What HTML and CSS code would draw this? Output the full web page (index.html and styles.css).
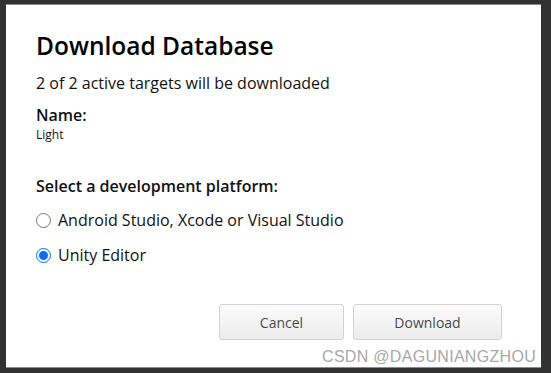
FILE: index.html
```html
<!DOCTYPE html>
<html lang="en">
<head>
  <meta charset="UTF-8">
  <title>Download Database</title>
  <link rel="stylesheet" href="styles.css">
</head>
<body>

<div class="dialog">
  <h1>Download Database</h1>
  <p class="summary">2 of 2 active targets will be downloaded</p>

  <div class="field">
    <div class="field-label">Name:</div>
    <div class="field-value">Light</div>
  </div>

  <div class="platforms">
    <div class="field-label">Select a development platform:</div>
    <label class="option"><input type="radio" name="platform"> Android Studio, Xcode or Visual Studio</label>
    <label class="option"><input type="radio" name="platform" checked> Unity Editor</label>
  </div>

  <div class="buttons">
    <button class="btn btn-cancel">Cancel</button>
    <button class="btn btn-download">Download</button>
  </div>

  <div class="watermark">CSDN @DAGUNIANGZHOU</div>
</div>

</body>
</html>
```

FILE: styles.css
```css
body {
  margin: 0;
  background: #323232;
  font-family: "Open Sans", "Noto Sans", sans-serif;
  color: #111;
}

.dialog {
  position: relative;
  box-sizing: border-box;
  width: 535px;
  height: 364px;
  margin: 4px 0 0 6px;
  border-top: 1px solid #8a8a8a;
  border-bottom: 1px solid #8a8a8a;
  background: #fff;
  padding: 25px 30px 0 30px;
}

h1 {
  margin: 0;
  font-size: 24.5px;
  font-weight: 600;
  line-height: 32px;
  color: #000;
}

.summary {
  margin: 10px 0 0 0;
  font-size: 16px;
  line-height: 22px;
}

.field {
  margin-top: 10px;
}

.field-label {
  font-size: 16px;
  font-weight: 600;
  line-height: 22px;
}

.field-value {
  margin-top: 1px;
  font-size: 12px;
  line-height: 16px;
}

.platforms {
  margin-top: 32px;
}

.platforms .field-label {
  margin-bottom: 1px;
}

.option {
  display: flex;
  align-items: center;
  gap: 7px;
  margin-top: 12px;
  font-size: 16px;
  line-height: 23px;
}

.option input {
  margin: 0;
  width: 15px;
  height: 15px;
  accent-color: #0a6ef0;
}

.buttons {
  display: flex;
  justify-content: flex-end;
  gap: 9px;
  margin-top: 37px;
  padding-right: 9px;
}

.btn {
  height: 36px;
  border: 1px solid #d2d2d2;
  border-radius: 3px;
  background: linear-gradient(#fcfcfc, #ececec);
  font-family: "Open Sans", "Noto Sans", sans-serif;
  font-size: 14px;
  color: #4a4a4a;
}

.btn-cancel {
  width: 125px;
}

.btn-download {
  width: 149px;
}

.watermark {
  position: absolute;
  right: 5px;
  bottom: 1px;
  font-family: "Liberation Sans", Arial, sans-serif;
  font-size: 16px;
  color: #a8a8a8;
  letter-spacing: 0.3px;
}
```
